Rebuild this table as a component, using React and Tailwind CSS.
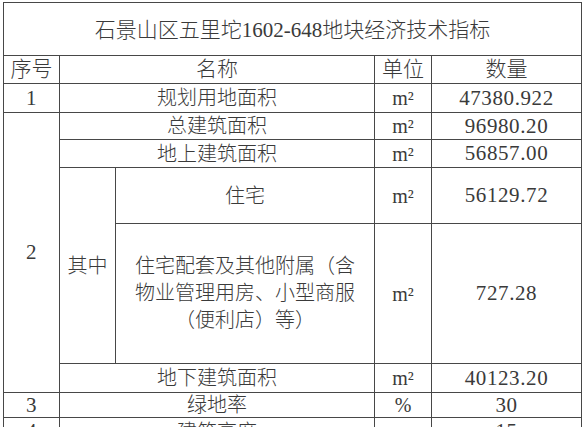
import React from "react";

const cell = "border border-[#474747] text-center align-middle p-0";
const num = `${cell} text-[21px] tracking-[0.6px]`;

export default function App() {
  return (
    <div
      className="min-h-screen bg-white pt-[2px] pl-[3px] overflow-hidden text-[#3a3a3a]"
      style={{ fontFamily: '"Liberation Serif", "Noto Sans CJK SC", serif' }}
    >
      <table className="table-fixed border-collapse w-[578px] text-[20px] font-light leading-none">
        <colgroup>
          <col className="w-[56px]" />
          <col className="w-[56px]" />
          <col className="w-[259px]" />
          <col className="w-[57px]" />
          <col className="w-[150px]" />
        </colgroup>
        <tbody>
          {/* Title */}
          <tr className="h-[53px]">
            <td colSpan={5} className={`${cell} text-[21px] pt-[2px]`}>
              石景山区五里坨1602-648地块经济技术指标
            </td>
          </tr>

          {/* Header */}
          <tr className="h-[28px]">
            <td className={`${cell} text-[21px]`}>序号</td>
            <td colSpan={2} className={`${cell} text-[21px]`}>名称</td>
            <td className={`${cell} text-[21px]`}>单位</td>
            <td className={`${cell} text-[21px]`}>数量</td>
          </tr>

          <tr className="h-[29px]">
            <td className={num}>1</td>
            <td colSpan={2} className={cell}>规划用地面积</td>
            <td className={cell}>m²</td>
            <td className={num}>47380.922</td>
          </tr>

          {/* Item 2 */}
          <tr className="h-[27px]">
            <td rowSpan={5} className={num}>2</td>
            <td colSpan={2} className={cell}>总建筑面积</td>
            <td className={cell}>m²</td>
            <td className={num}>96980.20</td>
          </tr>
          <tr className="h-[28px]">
            <td colSpan={2} className={cell}>地上建筑面积</td>
            <td className={cell}>m²</td>
            <td className={num}>56857.00</td>
          </tr>
          <tr className="h-[56px]">
            <td rowSpan={2} className={cell}>其中</td>
            <td className={cell}>住宅</td>
            <td className={cell}>m²</td>
            <td className={num}>56129.72</td>
          </tr>
          <tr className="h-[140px]">
            <td className={`${cell} leading-[27px]`}>
              住宅配套及其他附属（含
              <br />
              物业管理用房、小型商服
              <br />
              （便利店）等）
            </td>
            <td className={cell}>m²</td>
            <td className={num}>727.28</td>
          </tr>
          <tr className="h-[29px]">
            <td colSpan={2} className={cell}>地下建筑面积</td>
            <td className={cell}>m²</td>
            <td className={num}>40123.20</td>
          </tr>

          <tr className="h-[25px]">
            <td className={num}>3</td>
            <td colSpan={2} className={cell}>绿地率</td>
            <td className={cell}>%</td>
            <td className={num}>30</td>
          </tr>
          <tr className="h-[28px]">
            <td className={num}>4</td>
            <td colSpan={2} className={cell}>建筑高度</td>
            <td className={cell}>m</td>
            <td className={num}>15</td>
          </tr>
        </tbody>
      </table>
    </div>
  );
}
